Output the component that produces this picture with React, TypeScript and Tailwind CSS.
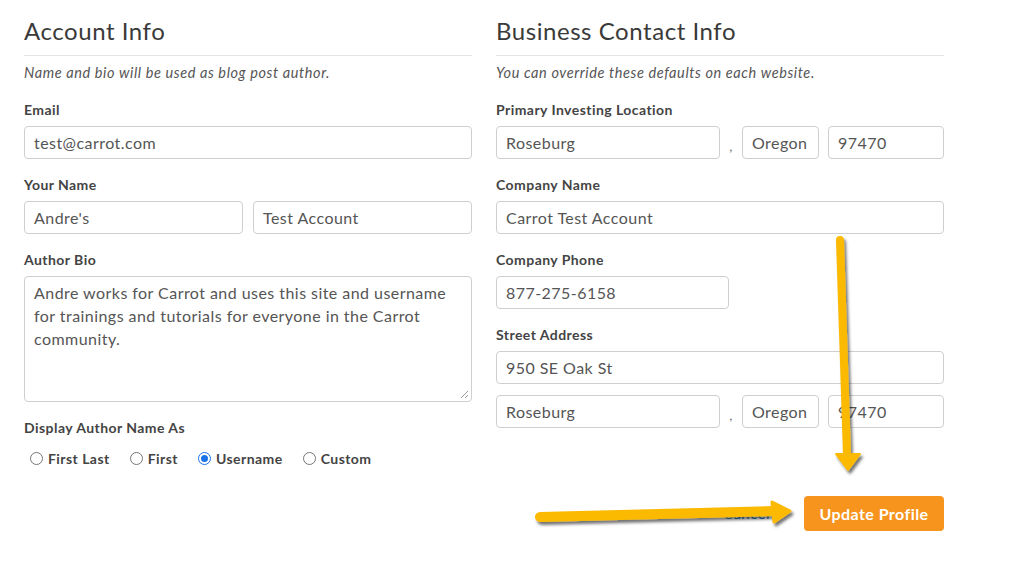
import React from "react";

const font = { fontFamily: "Lato, 'Open Sans', sans-serif" };

function Field({ value, className = "" }: { value: string; className?: string }) {
  return (
    <div
      className={`flex h-[33px] items-center rounded-[4px] border border-[#cfcfcf] bg-white px-[9px] text-[16px] text-[#555] ${className}`}
    >
      {value}
    </div>
  );
}

function Label({ children }: { children: React.ReactNode }) {
  return <div className="mb-[7px] text-[14px] font-bold leading-[18px] text-[#444]">{children}</div>;
}

function CityRow() {
  return (
    <div className="flex items-center">
      <Field value="Roseburg" className="w-[224px]" />
      <span className="w-[22px] pt-[6px] text-center text-[14px] text-[#777]">,</span>
      <Field value="Oregon" className="w-[77px]" />
      <Field value="97470" className="ml-[9px] flex-1" />
    </div>
  );
}

function Radio({ label, checked = false }: { label: string; checked?: boolean }) {
  return (
    <label className="flex items-center gap-[5px] text-[14px] font-bold text-[#444]">
      <span
        className={`flex h-[13px] w-[13px] items-center justify-center rounded-full border ${
          checked ? "border-[#1a73e8]" : "border-[#767676]"
        } bg-white`}
      >
        {checked && <span className="h-[7px] w-[7px] rounded-full bg-[#1a73e8]" />}
      </span>
      {label}
    </label>
  );
}

function Section({ title, note, children }: { title: string; note: string; children: React.ReactNode }) {
  return (
    <div className="w-[448px]">
      <h2 className="pt-[16px] text-[24px] font-normal leading-[30px] tracking-[0.55px] text-[#3a3a3a]">{title}</h2>
      <div className="mt-[9px] border-t border-[#e3e3e3]" />
      <p className="mt-[8px] text-[14.5px] italic leading-[18px] tracking-[0.6px] text-[#555]">{note}</p>
      <div className="mt-[19px] flex flex-col gap-[17px]">{children}</div>
    </div>
  );
}

export default function App() {
  return (
    <div className="relative h-[572px] w-[1024px] overflow-hidden bg-white tracking-[0.45px]" style={font}>
      <div className="flex gap-[24px] pl-[24px]">
        <Section title="Account Info" note="Name and bio will be used as blog post author.">
          <div>
            <Label>Email</Label>
            <Field value="test@carrot.com" />
          </div>
          <div>
            <Label>Your Name</Label>
            <div className="flex gap-[10px]">
              <Field value="Andre's" className="flex-1" />
              <Field value="Test Account" className="flex-1" />
            </div>
          </div>
          <div>
            <Label>Author Bio</Label>
            <div className="relative h-[126px] rounded-[4px] border border-[#cfcfcf] pl-[9px] pr-[12px] pt-[4px] text-[16px] leading-[23px] text-[#555]">
              Andre works for Carrot and uses this site and username for trainings and tutorials for everyone in the
              Carrot community.
              <svg className="absolute bottom-[2px] right-[2px]" width="9" height="9" viewBox="0 0 9 9">
                <path d="M8 1 L1 8 M8 5 L5 8" stroke="#999" strokeWidth="1" />
              </svg>
            </div>
          </div>
          <div>
            <Label>Display Author Name As</Label>
            <div className="mt-[11px] flex items-center gap-[20px] pl-[6px]">
              <Radio label="First Last" />
              <Radio label="First" />
              <Radio label="Username" checked />
              <Radio label="Custom" />
            </div>
          </div>
        </Section>

        <Section title="Business Contact Info" note="You can override these defaults on each website.">
          <div>
            <Label>Primary Investing Location</Label>
            <CityRow />
          </div>
          <div>
            <Label>Company Name</Label>
            <Field value="Carrot Test Account" />
          </div>
          <div>
            <Label>Company Phone</Label>
            <Field value="877-275-6158" className="w-[233px]" />
          </div>
          <div>
            <Label>Street Address</Label>
            <div className="flex flex-col gap-[11px]">
              <Field value="950 SE Oak St" />
              <CityRow />
            </div>
          </div>
          <div className="mt-[51px] flex items-center justify-end gap-[34px]">
            <a className="text-[15px] text-[#1d83c4]">Cancel</a>
            <button className="h-[35px] w-[140px] rounded-[4px] bg-[#f7941d] text-[16px] font-bold text-white">
              Update Profile
            </button>
          </div>
        </Section>
      </div>

      {/* annotation arrows */}
      <svg className="pointer-events-none absolute inset-0" width="1024" height="572">
        <defs>
          <filter id="sh" x="-20%" y="-20%" width="140%" height="140%">
            <feDropShadow dx="2" dy="3" stdDeviation="1.5" floodColor="#000" floodOpacity="0.55" />
          </filter>
        </defs>
        <g filter="url(#sh)" fill="#fbb900" stroke="#fbb900" strokeLinecap="round" strokeLinejoin="round">
          <path d="M840 240 L847 455" strokeWidth="8" fill="none" />
          <path d="M836 454 L860 454 L848 470 Z" strokeWidth="2" />
          <path d="M540 517 L776 511" strokeWidth="10" fill="none" />
          <path d="M772 502 L790 511 L774 522 Z" strokeWidth="3" />
        </g>
      </svg>
    </div>
  );
}
